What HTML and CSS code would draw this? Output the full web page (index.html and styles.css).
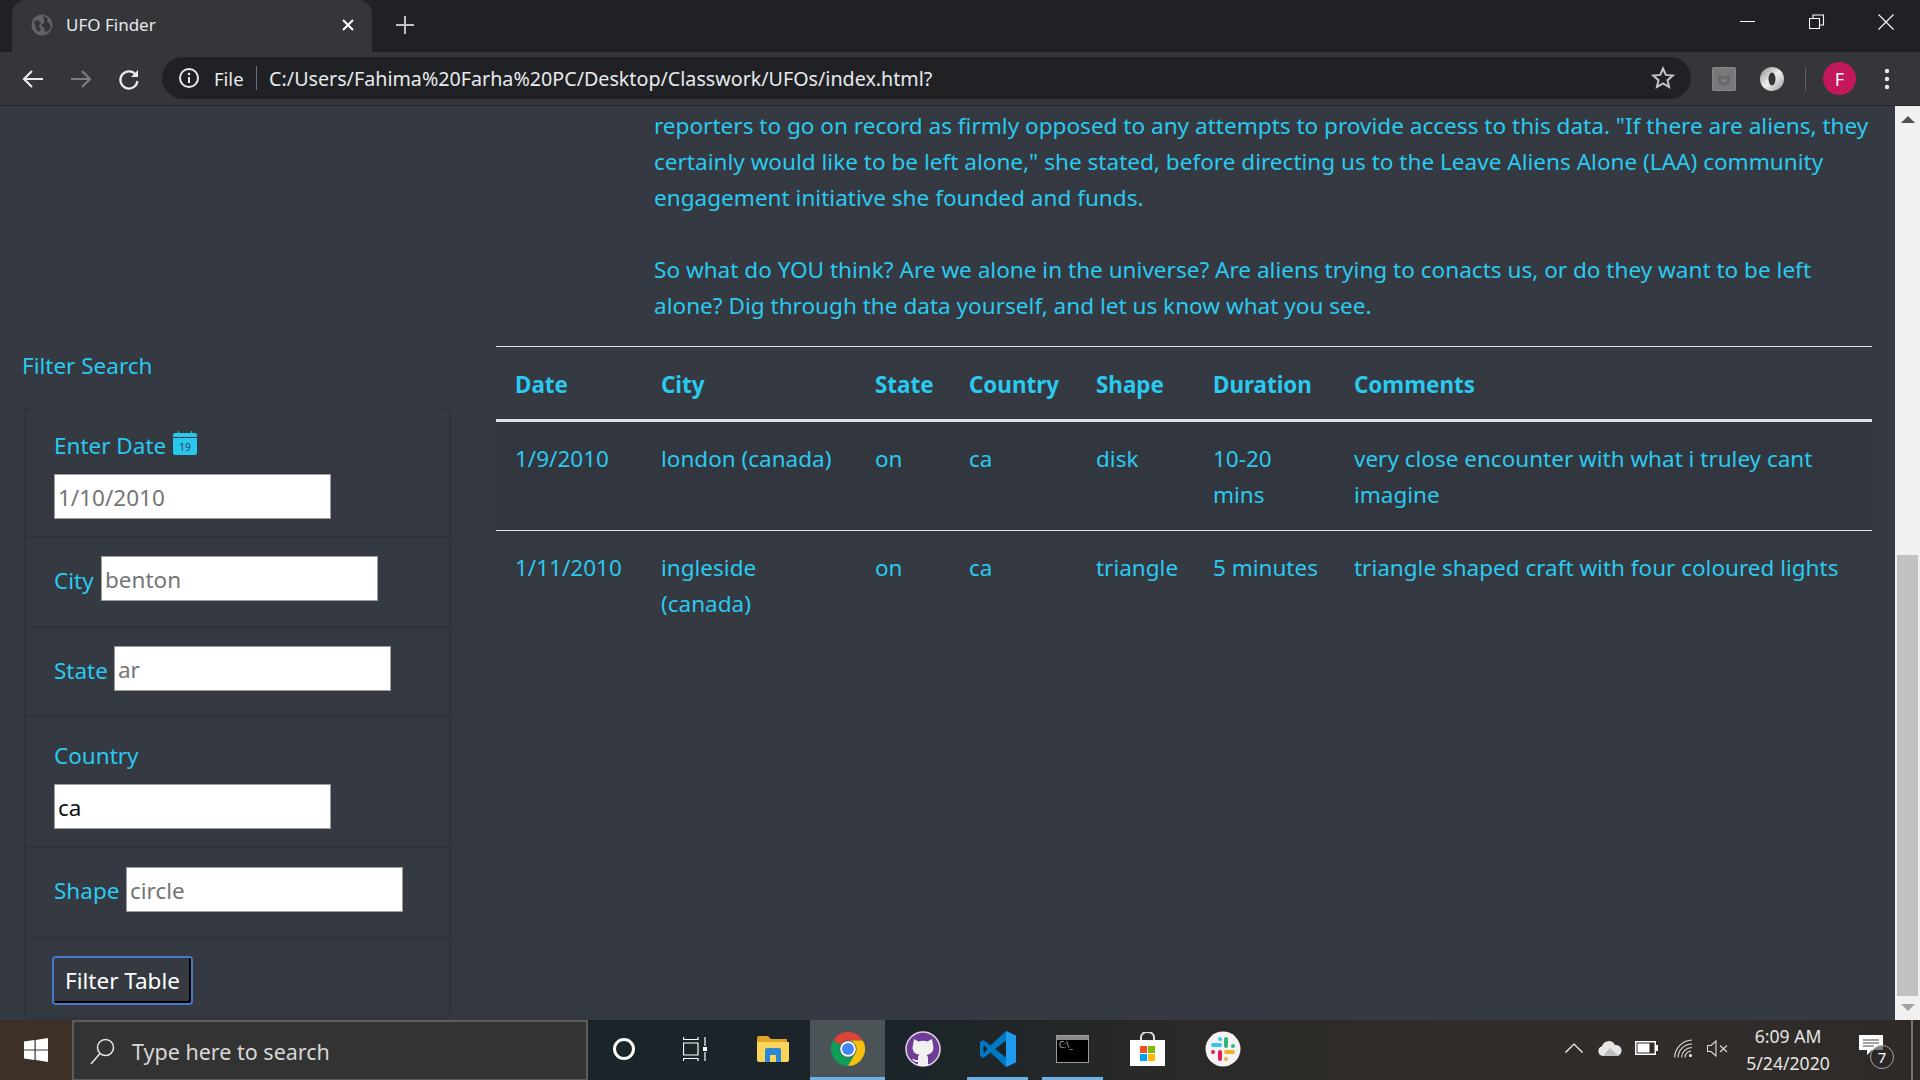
FILE: index.html
```html
<!DOCTYPE html>
<html lang="en">
<head>
<meta charset="utf-8">
<title>UFO Finder</title>
<link rel="stylesheet" href="styles.css">
</head>
<body>
<header class="tabstrip">
  <div class="tab">
    <svg class="favicon" width="22" height="22" viewBox="0 0 22 22"><circle cx="11" cy="11" r="10.5" fill="#5f6368"/><path d="M3 7l4-1 3 3-2 3 2 3-2 3-3-3-1-4zM12 2l5 2-1 3 3 3 1 4-3 3-3 1-1-4-3-3 3-2 0-3z" fill="#35363a"/></svg>
    <span class="tab-title">UFO Finder</span>
    <svg class="tab-close" width="12" height="12" viewBox="0 0 12 12"><path d="M1 1l10 10M11 1L1 11" stroke="#fff" stroke-width="2"/></svg>
  </div>
  <svg class="newtab" width="18" height="18" viewBox="0 0 18 18"><path d="M9 0v18M0 9h18" stroke="#bdc1c6" stroke-width="2"/></svg>
  <div class="winctl">
    <svg width="16" height="16" viewBox="0 0 16 16"><path d="M0 7.500h15" stroke="#fff" stroke-width="1"/></svg>
    <svg width="16" height="16" viewBox="0 0 16 16"><path d="M.5 4.500h10v10H.5zM4 4.500V1h10.500v10h-4" fill="none" stroke="#fff" stroke-width="1.100"/></svg>
    <svg width="16" height="16" viewBox="0 0 16 16"><path d="M.5.5l15 15M15.500.5l-15 15" stroke="#fff" stroke-width="1.100"/></svg>
  </div>
</header>
<nav class="toolbar">
  <svg class="navicon" width="24" height="24" viewBox="0 0 24 24"><path d="M22 12H3M11 4l-8 8 8 8" fill="none" stroke="#e8eaed" stroke-width="2.200"/></svg>
  <svg class="navicon" width="24" height="24" viewBox="0 0 24 24"><path d="M2 12h19M13 4l8 8-8 8" fill="none" stroke="#7b7e82" stroke-width="2.200"/></svg>
  <svg class="navicon" width="24" height="24" viewBox="0 0 24 24"><path d="M19 8a8.600 8.600 0 1 0 1.500 6" fill="none" stroke="#e8eaed" stroke-width="2.200"/><path d="M21 3v7h-7z" fill="#e8eaed"/></svg>
  <div class="omnibox">
    <svg width="22" height="22" viewBox="0 0 22 22"><circle cx="11" cy="11" r="9" fill="none" stroke="#e8eaed" stroke-width="2"/><path d="M11 10v6" stroke="#e8eaed" stroke-width="2"/><circle cx="11" cy="7" r="1.300" fill="#e8eaed"/></svg>
    <span class="scheme">File</span>
    <span class="omni-sep"></span>
    <span class="url">C:/Users/Fahima%20Farha%20PC/Desktop/Classwork/UFOs/index.html?</span>
    <svg class="star" width="24" height="24" viewBox="0 0 24 24"><path d="M12 2.500l2.800 6.400 7 .7-5.300 4.600 1.600 6.800L12 17.400 5.900 21l1.600-6.800L2.200 9.600l7-.7z" fill="none" stroke="#c4c7ca" stroke-width="2"/></svg>
  </div>
  <svg class="ext-a" width="24" height="24" viewBox="0 0 24 24"><rect width="24" height="24" rx="2" fill="#85888a"/><rect x="1" y="1" width="22" height="22" rx="1.500" fill="#77797b"/><path d="M6 7l6 3 6-3v8l-6 4-6-4z" fill="#66696b"/><path d="M9 11l3 2 3-2v3l-3 2-3-2z" fill="#7d8082"/></svg>
  <svg class="ext-b" width="24" height="24" viewBox="0 0 24 24"><defs><linearGradient id="ring" x1="0" y1="0" x2="1" y2="1"><stop offset="0" stop-color="#8a8a8a"/><stop offset=".5" stop-color="#efefef"/><stop offset="1" stop-color="#9a9a9a"/></linearGradient></defs><circle cx="12" cy="12" r="12" fill="url(#ring)"/><ellipse cx="12" cy="12" rx="3.500" ry="6.500" fill="#35363a"/></svg>
  <span class="tool-sep"></span>
  <span class="avatar">F</span>
  <svg class="kebab" width="6" height="22" viewBox="0 0 6 22"><circle cx="3" cy="3" r="2.200" fill="#e8eaed"/><circle cx="3" cy="11" r="2.200" fill="#e8eaed"/><circle cx="3" cy="19" r="2.200" fill="#e8eaed"/></svg>
</nav>
<div class="viewport">
  <main class="page">
    <aside class="sidebar">
      <h4 class="filter-title">Filter Search</h4>
      <ul class="card">
        <li class="item item-date">
          <label class="stack-label" for="date">Enter Date <svg class="cal" width="24" height="24" viewBox="0 0 24 24"><path d="M2 2h3V0h1v2h12V0h1v2h3a2 2 0 0 1 2 2v2H0V4a2 2 0 0 1 2-2zM0 7h24v15a2 2 0 0 1-2 2H2a2 2 0 0 1-2-2z" fill="#28c8ee"/><text x="12" y="20" text-anchor="middle" class="cal-num">19</text></svg></label>
          <input id="date" class="field" type="text" placeholder="1/10/2010">
        </li>
        <li class="item item-inline item-city">
          <label class="inline-label w-city" for="city">City</label>
          <input id="city" class="field" type="text" placeholder="benton">
        </li>
        <li class="item item-inline item-state">
          <label class="inline-label w-state" for="state">State</label>
          <input id="state" class="field" type="text" placeholder="ar">
        </li>
        <li class="item item-country">
          <label class="stack-label" for="country">Country</label>
          <input id="country" class="field" type="text" value="ca">
        </li>
        <li class="item item-inline item-shape">
          <label class="inline-label w-shape" for="shape">Shape</label>
          <input id="shape" class="field" type="text" placeholder="circle">
        </li>
        <li class="item item-button">
          <button class="filter-btn" type="button">Filter Table</button>
        </li>
      </ul>
    </aside>
    <section class="content">
      <p class="intro">reporters to go on record as firmly opposed to any attempts to provide access to this data. "If there are aliens, they<br>certainly would like to be left alone," she stated, before directing us to the Leave Aliens Alone (LAA) community<br>engagement initiative she founded and funds.<br><br>So what do YOU think? Are we alone in the universe? Are aliens trying to conacts us, or do they want to be left<br>alone? Dig through the data yourself, and let us know what you see.</p>
      <table class="ufo">
        <colgroup>
          <col class="c-date"><col class="c-city"><col class="c-state"><col class="c-country"><col class="c-shape"><col class="c-duration"><col class="c-comments">
        </colgroup>
        <thead>
          <tr><th>Date</th><th>City</th><th>State</th><th>Country</th><th>Shape</th><th>Duration</th><th>Comments</th></tr>
        </thead>
        <tbody>
          <tr class="odd"><td>1/9/2010</td><td>london (canada)</td><td>on</td><td>ca</td><td>disk</td><td>10-20<br>mins</td><td>very close encounter with what i truley cant<br>imagine</td></tr>
          <tr><td>1/11/2010</td><td>ingleside<br>(canada)</td><td>on</td><td>ca</td><td>triangle</td><td>5 minutes</td><td>triangle shaped craft with four coloured lights</td></tr>
        </tbody>
      </table>
    </section>
  </main>
  <div class="scrollbar">
    <svg class="sb-up" width="14" height="7" viewBox="0 0 14 7"><path d="M7 0l7 7H0z" fill="#505050"/></svg>
    <div class="sb-thumb"></div>
    <svg class="sb-down" width="14" height="7" viewBox="0 0 14 7"><path d="M0 0h14L7 7z" fill="#a3a3a3"/></svg>
  </div>
</div>
<footer class="taskbar">
  <div class="start">
    <svg width="24" height="24" viewBox="0 0 24 24"><path d="M0 3.500l10.500-1.400v9.300H0zM11.700 1.900L24 0v11.400H11.700zM0 12.600h10.500v9.400L0 20.600zM11.700 12.600H24V24l-12.300-1.900z" fill="#fff"/></svg>
  </div>
  <div class="search">
    <svg width="26" height="28" viewBox="0 0 26 28"><circle cx="15.500" cy="10.500" r="8" fill="none" stroke="#e6e6e6" stroke-width="1.500"/><path d="M10 16.500L1 27" stroke="#e6e6e6" stroke-width="1.500"/></svg>
    <span class="search-text">Type here to search</span>
  </div>
  <div class="slot slot-first"><svg width="24" height="24" viewBox="0 0 24 24"><circle cx="12" cy="12" r="9.500" fill="none" stroke="#fff" stroke-width="3"/></svg></div>
  <div class="slot"><svg class="nudge-l" width="24" height="24" viewBox="0 0 24 24"><path d="M.5 0v2.500H15V0M.5 24v-2.500H15V24M.5 6h14.500v12H.5zM22 0v9M22 15v9" fill="none" stroke="#fff" stroke-width="1.200"/><rect x="20" y="10" width="4" height="4" fill="#fff"/></svg></div>
  <div class="slot"><svg width="32" height="26" viewBox="0 0 32 26"><path d="M0 2a2 2 0 0 1 2-2h9l3 3h16v6H0z" fill="#e0a526"/><path d="M0 6h32v18a2 2 0 0 1-2 2H2a2 2 0 0 1-2-2z" fill="#fcd45a"/><path d="M8 26v-12a2 2 0 0 1 2-2h12a2 2 0 0 1 2 2v12h-5v-7h-6v7z" fill="#2b88d8"/></svg></div>
  <div class="slot slot-active"><svg width="34" height="34" viewBox="0 0 48 48"><path d="M3.200 12A24 24 0 0 1 44.800 12H24A12 12 0 0 0 13.600 18z" fill="#db4437"/><path d="M3.200 12A24 24 0 0 0 24 48L34.400 30A12 12 0 0 1 13.600 18z" fill="#0f9d58"/><path d="M44.800 12A24 24 0 0 1 24 48L34.400 30A12 12 0 0 0 24 12z" fill="#f4c20d"/><circle cx="24" cy="24" r="11" fill="#fff"/><circle cx="24" cy="24" r="8.500" fill="#4285f4"/></svg></div>
  <div class="slot"><svg width="36" height="36" viewBox="0 0 36 36"><circle cx="18" cy="18" r="17" fill="#6f3d98" stroke="#ded8e4" stroke-width="1.500"/><path d="M9 8l4.500 2.500a13 13 0 0 1 9 0L27 8l1 6c1.500 4.500-1 9.500-6.500 10 1 1 1.500 2 1.500 3.500V35H13v-4c-3 .5-5-1-6-3.500 2 1 3.500 2 6 1.500v-2c0-1.500.5-2.500 1.500-3.500C9 23.500 6.500 18.500 8 14z" fill="#f0f0f0"/></svg></div>
  <div class="slot slot-open"><svg width="36" height="36" viewBox="0 0 36 36"><path d="M26 0l10 4.800v26.400L26 36 10.500 21.500 3.500 27 0 25V11l3.500-2 7 5.500z" fill="#0078c8"/><path d="M26 0l10 4.800v26.400L26 36z" fill="#1f9cf0"/><path d="M26 9.500L15 18l11 8.500z" fill="#1c2327"/><path d="M3.500 13.500L7.500 18l-4 4.500z" fill="#1c2327"/></svg></div>
  <div class="slot slot-open"><div class="term"><span class="term-bar"></span><span class="term-text">C:\_</span></div></div>
  <div class="slot"><svg width="35" height="34" viewBox="0 0 35 34"><path d="M11 8V5a6.500 5 0 0 1 13 0v3" fill="none" stroke="#ddd" stroke-width="2"/><rect y="8" width="35" height="26" fill="#fff"/><rect x="10" y="14" width="7" height="7" fill="#f25022"/><rect x="18" y="14" width="7" height="7" fill="#7fba00"/><rect x="10" y="22" width="7" height="7" fill="#00a4ef"/><rect x="18" y="22" width="7" height="7" fill="#ffb900"/></svg></div>
  <div class="slot"><svg width="36" height="36" viewBox="0 0 36 36"><circle cx="18" cy="18" r="17.500" fill="#f4f2f2"/><g stroke-width="4" stroke-linecap="round" fill="none"><path d="M8 14h7M15 8v0" stroke="#36c5f0"/><path d="M21 8v7M28 15v0" stroke="#2eb67d"/><path d="M28 21h-7M21 28v0" stroke="#ecb22e"/><path d="M15 28v-7M8 21v0" stroke="#e01e5a"/></g></svg></div>
  <div class="tray">
    <svg width="18" height="10" viewBox="0 0 18 10"><path d="M.5 9.500L9 1l8.500 8.500" fill="none" stroke="#fff" stroke-width="1.200"/></svg>
    <svg width="24" height="16" viewBox="0 0 24 16"><path d="M5 16a5 5 0 0 1-1-9.800A7 7 0 0 1 17 5a5.500 5.500 0 0 1 2 11z" fill="#e6e6e6"/><path d="M5 16l7-8 9 8z" fill="#bdbdbd"/></svg>
    <svg width="23" height="14" viewBox="0 0 23 14"><rect x=".75" y=".75" width="19.500" height="12.500" fill="none" stroke="#fff" stroke-width="1.500"/><rect x="2.500" y="2.500" width="12" height="9" fill="#fff"/><rect x="21" y="4" width="2" height="6" fill="#fff"/></svg>
    <svg width="19" height="19" viewBox="0 0 19 19"><g fill="none" stroke="#ddd" stroke-width="1.100"><path d="M.6 18.500A18 18 0 0 1 18 1"/><path d="M4 18.500A14 14 0 0 1 18 5"/><path d="M7.500 18.500A10.500 10.500 0 0 1 18 8.500"/><path d="M11 18.500A7 7 0 0 1 17 12"/></g><circle cx="16.500" cy="16.500" r="1.500" fill="#fff"/></svg>
    <svg width="21" height="17" viewBox="0 0 21 17"><path d="M.5 5.500h3.500L9 1v15L4 11.500H.5z" fill="none" stroke="#ddd" stroke-width="1.100"/><path d="M13 5.500l7 6.500M20 5.500l-7 6.500" stroke="#ddd" stroke-width="1.100"/></svg>
    <div class="clock"><span>6:09 AM</span><span>5/24/2020</span></div>
    <div class="notif">
      <svg width="24" height="20" viewBox="0 0 24 20"><path d="M0 0h24v15H13l-5 5v-5H0z" fill="#fff"/><path d="M4 5h16M4 8h16M4 11h11" stroke="#444" stroke-width="1"/></svg>
      <span class="badge">7</span>
    </div>
  </div>
  <span class="show-desktop"></span>
</footer>
</body>
</html>
```
FILE: styles.css
```css
* { box-sizing: border-box; }
html, body { margin: 0; height: 1080px; overflow: hidden; }
body { display: flex; flex-direction: column; width: 1920px; font-family: "Noto Sans", "Open Sans", sans-serif; background: #353941; }

.tabstrip { flex: none; height: 52px; background: #202124; display: flex; align-items: center; padding-left: 12px; }
.tab { width: 360px; height: 52px; background: #35363a; border-radius: 14px 14px 0 0; display: flex; align-items: center; padding: 0 18px 3px 19px; color: #e8eaed; }
.favicon { flex: none; }
.tab-title { margin-left: 13px; font-size: 17px; flex: 1; }
.newtab { margin-left: 24px; margin-bottom: 2px; }
.winctl { margin-left: auto; display: flex; gap: 53px; padding-right: 26px; padding-bottom: 8px; }

.toolbar { flex: none; height: 54px; background: #35363a; border-bottom: 1px solid #26272a; display: flex; align-items: center; padding-left: 21px; }
.navicon { margin-right: 24px; }
.omnibox { width: 1529px; margin-left: -3px; height: 42px; margin-top: -1px; background: #202124; border-radius: 21px; display: flex; align-items: center; padding-left: 16px; color: #e8eaed; }
.scheme { margin-left: 14px; font-size: 18.500px; }
.omni-sep { width: 1.500px; height: 24px; background: #6d6e71; margin: 0 12px; }
.url { font-size: 19.700px; white-space: nowrap; }
.star { margin-left: auto; margin-right: 16px; }
.ext-a { margin-left: 21px; }
.ext-b { margin-left: 24px; }
.tool-sep { width: 1px; height: 24px; background: #5f6164; margin-left: 21px; }
.avatar { width: 33px; height: 33px; border-radius: 50%; background: #c2185b; color: #fff; font-size: 18px; display: flex; align-items: center; justify-content: center; margin-left: 17px; }
.kebab { margin-left: 28px; }

.viewport { flex: none; height: 914px; display: flex; overflow: hidden; }
.page { width: 1895px; height: 914px; display: flex; overflow: hidden; color: #2acaf0; font-size: 22.500px; line-height: 36px; }

.sidebar { flex: none; width: 496px; padding: 242px 0 0 23px; }
.filter-title { margin: 0 0 23px -1px; font-size: 22.500px; line-height: 36px; font-weight: 400; }
.card { list-style: none; margin: 0 0 0 1px; padding: 0; width: 427px; height: 612px; border: 2px solid #2f333a; border-radius: 6px; display: flex; flex-direction: column; }
.item { padding-left: 28px; border-bottom: 2px solid #2f333a; }
.item:last-child { border-bottom: 0; }
.item-inline { display: flex; align-items: flex-start; }
.item-date { padding-top: 19px; padding-bottom: 17px; }
.item-city { padding-top: 18px; padding-bottom: 25px; }
.item-state { padding-top: 18px; padding-bottom: 24px; }
.item-country { padding-top: 21px; padding-bottom: 17px; }
.item-shape { padding-top: 19px; padding-bottom: 25px; }
.item-button { padding-top: 18px; }
.stack-label { display: flex; align-items: center; gap: 7px; height: 36px; margin-bottom: 10px; }
.inline-label { flex: none; padding-top: 7px; }
.item-shape .inline-label { padding-top: 6px; }
.w-city { width: 47px; }
.w-state { width: 60px; }
.w-shape { width: 72px; }
.cal { margin-top: -6px; }
.cal-num { font-size: 10px; font-family: "Noto Sans", sans-serif; fill: #2d3a44; }
.field { width: 277px; height: 45px; padding: 2px 3px 0; border: 1.500px solid #9b9b9b; background: #fff; color: #111; font-family: inherit; font-size: 22.500px; border-radius: 0; outline: 0; }
.field::placeholder { color: #757575; opacity: 1; }
.filter-btn { width: 137px; height: 45px; margin-top: 1px; padding: 0 0 1px; background: #343a40; color: #fff; font-family: inherit; font-size: 22.500px; border: 0; border-radius: 2px; box-shadow: inset -2px -2px 0 #000, 0 0 0 2px #4579cc; }

.content { flex: none; width: 1376px; padding-top: 2px; }
.intro { margin: 0 0 22px 158px; font-size: 22.570px; white-space: nowrap; }
.ufo { width: 1376px; table-layout: fixed; border-collapse: collapse; }
.c-date { width: 146px; }
.c-city { width: 214px; }
.c-state { width: 94px; }
.c-country { width: 127px; }
.c-shape { width: 117px; }
.c-duration { width: 141px; }
.c-comments { width: 537px; }
.ufo th, .ufo td { padding: 19px 0 17px 19px; text-align: left; vertical-align: top; white-space: nowrap; }
.ufo th { font-weight: 700; font-size: 22.400px; line-height: 38px; padding-bottom: 15px; border-top: 1.500px solid #dee2e6; border-bottom: 3px solid #dee2e6; }
.ufo td { border-top: 1.500px solid #dee2e6; }
.ufo thead + tbody tr:first-child td { border-top: 0; }
.odd { background: #32363e; }

.scrollbar { flex: none; width: 25px; height: 914px; background: #f1f1f1; display: flex; flex-direction: column; align-items: center; padding-top: 10px; }
.sb-thumb { width: 21px; height: 441px; background: #c1c1c1; margin-top: 432px; }
.sb-down { margin-top: 8px; }

.taskbar { flex: none; height: 60px; padding-right: 7px; display: flex; align-items: stretch; background: linear-gradient(90deg, #3c3027 0, #3c3027 72px, #1b2429 600px, #1b2429 900px, #2b2a28 1200px, #332d29 1600px, #2d2a28 1920px); }
.start { width: 72px; display: flex; align-items: center; justify-content: center; }
.search { width: 516px; background: #333; border: 2px solid #5c5c5c; border-bottom-width: 1px; display: flex; align-items: center; padding-left: 16px; color: #d8d8d8; }
.search-text { font-size: 21.500px; margin-left: 16px; padding-top: 1px; }
.slot { width: 75px; display: flex; align-items: center; justify-content: center; padding-bottom: 2px; }
.slot-first { width: 72px; }
.nudge-l { margin-right: 6px; }
.slot-active { background: #4c5356; border-bottom: 3px solid #6cb0e8; padding-bottom: 0; }
.slot-open { background: linear-gradient(#6cb0e8, #6cb0e8) center bottom / 61px 3px no-repeat; }
.term { width: 33px; height: 28px; background: #000; border: 1px solid #9a9a9a; display: flex; flex-direction: column; }
.term-bar { height: 4px; background: #8a8a8a; }
.term-text { color: #bbb; font-size: 8px; line-height: 9px; padding-left: 2px; }
.tray { margin-left: auto; display: flex; align-items: center; padding-bottom: 4px; }
.tray > svg:nth-child(2) { margin-left: 15px; }
.tray > svg:nth-child(3) { margin-left: 13px; }
.tray > svg:nth-child(4) { margin-left: 16px; }
.tray > svg:nth-child(5) { margin-left: 14px; }
.clock { width: 100px; margin-left: 10px; display: flex; flex-direction: column; align-items: center; gap: 4px; color: #e6e6e6; font-size: 17.600px; line-height: 23px; padding-top: 4px; }
.notif { position: relative; width: 28px; height: 30px; margin-left: 21px; padding-top: 2px; }
.badge { position: absolute; left: 11px; top: 12px; width: 24px; height: 24px; border: 1px solid #aaa; border-radius: 50%; color: #fff; font-size: 15px; line-height: 22px; text-align: center; background: rgba(40,38,36,.6); }
.show-desktop { width: 2px; margin-left: 24px; background: #77736f; }
```
